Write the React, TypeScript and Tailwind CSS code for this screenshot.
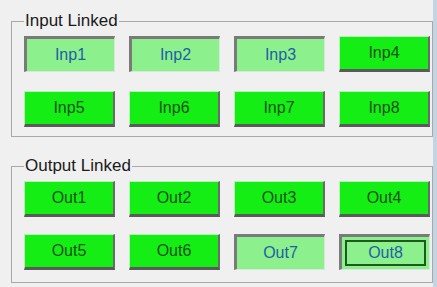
import type { ReactNode } from 'react';

type Btn = { label: string; on?: boolean; focus?: boolean };

const inputs: Btn[] = [
  { label: 'Inp1', on: true },
  { label: 'Inp2', on: true },
  { label: 'Inp3', on: true },
  { label: 'Inp4' },
  { label: 'Inp5' },
  { label: 'Inp6' },
  { label: 'Inp7' },
  { label: 'Inp8' },
];

const outputs: Btn[] = [
  { label: 'Out1' },
  { label: 'Out2' },
  { label: 'Out3' },
  { label: 'Out4' },
  { label: 'Out5' },
  { label: 'Out6' },
  { label: 'Out7', on: true },
  { label: 'Out8', on: true, focus: true },
];

function LinkButton({ btn }: { btn: Btn }) {
  if (btn.on) {
    return (
      <div className="h-[36px] bg-[#8cf08c] border-t-[3px] border-l-[3px] border-b border-r border-t-[#7a7a7a] border-l-[#7a7a7a] border-b-[#d8e8d8] border-r-[#d8e8d8] flex items-center justify-center p-[3px]">
        <div
          className={`w-full h-full flex items-center justify-center text-[16px] text-[#1f5fa6] ${
            btn.focus ? 'border-2 border-[#1e5a1e]' : ''
          }`}
        >
          {btn.label}
        </div>
      </div>
    );
  }
  return (
    <div className="h-[36px] bg-[#14ee14] border-b-[3px] border-r-[2px] border-t border-l border-b-[#5a5a5a] border-r-[#6a6a6a] border-t-[#b8f0b8] border-l-[#b8f0b8] flex items-center justify-center text-[16px] text-[#145214]">
      {btn.label}
    </div>
  );
}

function Group({
  title,
  children,
  rowGap,
  padBottom,
}: {
  title: string;
  children: ReactNode;
  rowGap: string;
  padBottom: string;
}) {
  return (
    <fieldset className={`w-[422px] border border-[#a8a8a8] pl-[12px] pr-[2px] pt-[6px] ${padBottom}`}>
      <legend className="text-[17px] leading-[18px] px-[1px] text-[#1a1a1a]">{title}</legend>
      <div className={`grid grid-cols-[repeat(4,91px)] gap-x-[14px] ${rowGap}`}>{children}</div>
    </fieldset>
  );
}

export default function App() {
  return (
    <div
      className="w-[437px] h-[287px] bg-[#f0f0f0] flex overflow-hidden"
      style={{ fontFamily: '"Liberation Sans", Arial, sans-serif' }}
    >
      <div className="flex-1 pl-[11px] pt-[12px] flex flex-col gap-[20px]">
        <Group title="Input Linked" rowGap="gap-y-[19px]" padBottom="pb-[9px]">
          {inputs.map((b) => (
            <LinkButton key={b.label} btn={b} />
          ))}
        </Group>
        <Group title="Output Linked" rowGap="gap-y-[17px]" padBottom="pb-[12px]">
          {outputs.map((b) => (
            <LinkButton key={b.label} btn={b} />
          ))}
        </Group>
      </div>
      <div className="w-[4px] bg-[#c4d4e4]" />
    </div>
  );
}
